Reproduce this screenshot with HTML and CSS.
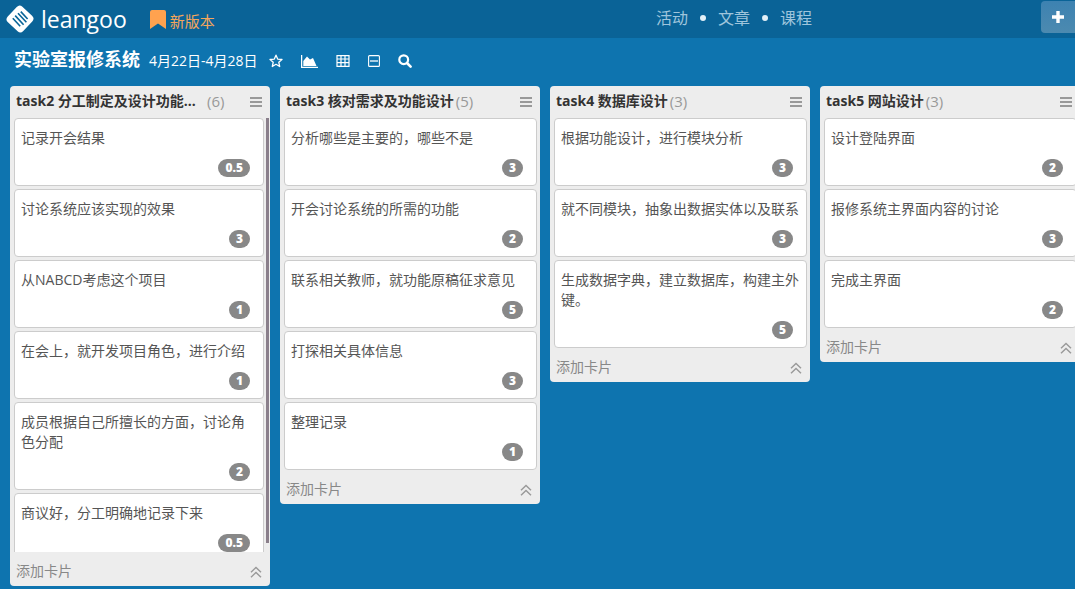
FILE: index.html
```html
<!DOCTYPE html>
<html lang="zh-CN">
<head>
<meta charset="utf-8">
<meta name="viewport" content="width=device-width, initial-scale=1">
<title>实验室报修系统 - leangoo</title>
<link rel="stylesheet" href="styles.css">
</head>
<body>
<svg class="sprite" aria-hidden="true">
  <symbol id="menu" viewBox="0 0 12 10"><path d="M0 1h12M0 5h12M0 9h12" fill="none" stroke="currentColor" stroke-width="2"/></symbol>
  <symbol id="up" viewBox="0 0 12 12"><path d="M1 6.2 6 1.4l5 4.8M1 11.2 6 6.4l5 4.8" fill="none" stroke="currentColor" stroke-width="1.4"/></symbol>
</svg>
<header class="topbar">
  <a class="brand" href="#">
    <svg class="brand-mark" viewBox="0 0 28 28" aria-hidden="true">
      <rect x="3.400" y="3.400" width="21.200" height="21.200" rx="4" transform="rotate(43 14 14)" fill="#fff"/>
      <path d="M6.800 13.200 14.200 21.200M9.200 10.600 17.600 19.700M12 8.200 20.400 17.300M14.800 6.600 21.600 14" fill="none" stroke="#0a6598" stroke-width="1.600"/>
    </svg>
    <span class="brand-name">leangoo</span>
  </a>
  <a class="new-version" href="#">
    <svg class="bookmark" viewBox="0 0 16 19" aria-hidden="true"><path d="M2 0h12q2 0 2 2v17l-8-5.500L0 19V2Q0 0 2 0z" fill="#ffa24f"/></svg>
    <span>新版本</span>
  </a>
  <nav class="nav">
    <a href="#">活动</a><i class="dot"></i><a href="#">文章</a><i class="dot"></i><a href="#">课程</a>
  </nav>
  <button class="add" type="button" aria-label="新建"><svg viewBox="0 0 12 12" width="12" height="12"><path d="M4.3 0h3.4v4.3H12v3.4H7.7V12H4.3V7.7H0V4.3h4.3z" fill="#fff"/></svg></button>
</header>
<main class="page">
  <div class="board-bar">
    <h1 class="board-title">实验室报修系统</h1>
    <span class="dates">4月22日-4月28日</span>
    <div class="tools">
      <button type="button" aria-label="收藏"><svg width="14" height="14" viewBox="0 0 14 14"><path d="m7 1.200 1.700 3.900 4.300.4-3.200 2.800.9 4.200L7 10.300l-3.700 2.200.9-4.200L1 5.500l4.300-.4z" fill="none" stroke="#fff" stroke-width="1.300" stroke-linejoin="round"/></svg></button>
      <button type="button" aria-label="图表"><svg width="17" height="13" viewBox="0 0 17 13"><path d="M.6 0v12.300H17" fill="none" stroke="#fff" stroke-width="1.300"/><path d="M2.300 11V6L6 1.500l3 3L12 3l3.500 8z" fill="#fff"/></svg></button>
      <button type="button" aria-label="表格"><svg width="14" height="12" viewBox="0 0 14 12"><path d="M1 .6h12v10.800H1zM1 4h12M1 7.700h12M5 .6v10.800M9 .6v10.800" fill="none" stroke="#fff" stroke-width="1.200"/></svg></button>
      <button type="button" aria-label="折叠"><svg width="12" height="12" viewBox="0 0 12 12"><rect x=".6" y=".6" width="10.800" height="10.800" rx="1" fill="none" stroke="#fff" stroke-width="1.100"/><path d="M2 6h8" stroke="#fff" stroke-width="1.300"/></svg></button>
      <button type="button" aria-label="搜索"><svg width="14" height="14" viewBox="0 0 14 14"><circle cx="5.700" cy="5.700" r="4.400" fill="none" stroke="#fff" stroke-width="2.200"/><path d="m9 9 3.600 3.600" stroke="#fff" stroke-width="2.600" stroke-linecap="round"/></svg></button>
    </div>
  </div>
  <div class="board">
    <section class="list">
      <header class="list-head"><h2>task2 分工制定及设计功能原型</h2><span class="count">(6)</span><button class="icon" type="button" aria-label="菜单"><svg width="12" height="10"><use href="#menu"/></svg></button></header>
      <div class="list-body scrolls">
        <div class="cards">
          <article class="card"><p>记录开会结果</p><span class="points">0.5</span></article>
          <article class="card"><p>讨论系统应该实现的效果</p><span class="points">3</span></article>
          <article class="card"><p>从NABCD考虑这个项目</p><span class="points">1</span></article>
          <article class="card"><p>在会上，就开发项目角色，进行介绍</p><span class="points">1</span></article>
          <article class="card"><p>成员根据自己所擅长的方面，讨论角色分配</p><span class="points">2</span></article>
          <article class="card"><p>商议好，分工明确地记录下来</p><span class="points">0.5</span></article>
        </div>
        <div class="track"><div class="thumb"></div></div>
      </div>
      <footer class="list-foot"><button class="add-card" type="button">添加卡片</button><button class="icon" type="button" aria-label="收起"><svg width="12" height="12"><use href="#up"/></svg></button></footer>
    </section>
    <section class="list">
      <header class="list-head"><h2>task3 核对需求及功能设计</h2><span class="count">(5)</span><button class="icon" type="button" aria-label="菜单"><svg width="12" height="10"><use href="#menu"/></svg></button></header>
      <div class="list-body"><div class="cards">
          <article class="card"><p>分析哪些是主要的，哪些不是</p><span class="points">3</span></article>
          <article class="card"><p>开会讨论系统的所需的功能</p><span class="points">2</span></article>
          <article class="card"><p>联系相关教师，就功能原稿征求意见</p><span class="points">5</span></article>
          <article class="card"><p>打探相关具体信息</p><span class="points">3</span></article>
          <article class="card"><p>整理记录</p><span class="points">1</span></article>
      </div></div>
      <footer class="list-foot"><button class="add-card" type="button">添加卡片</button><button class="icon" type="button" aria-label="收起"><svg width="12" height="12"><use href="#up"/></svg></button></footer>
    </section>
    <section class="list">
      <header class="list-head"><h2>task4 数据库设计</h2><span class="count">(3)</span><button class="icon" type="button" aria-label="菜单"><svg width="12" height="10"><use href="#menu"/></svg></button></header>
      <div class="list-body"><div class="cards">
          <article class="card"><p>根据功能设计，进行模块分析</p><span class="points">3</span></article>
          <article class="card"><p>就不同模块，抽象出数据实体以及联系</p><span class="points">3</span></article>
          <article class="card"><p>生成数据字典，建立数据库，构建主外键。</p><span class="points">5</span></article>
      </div></div>
      <footer class="list-foot"><button class="add-card" type="button">添加卡片</button><button class="icon" type="button" aria-label="收起"><svg width="12" height="12"><use href="#up"/></svg></button></footer>
    </section>
    <section class="list">
      <header class="list-head"><h2>task5 网站设计</h2><span class="count">(3)</span><button class="icon" type="button" aria-label="菜单"><svg width="12" height="10"><use href="#menu"/></svg></button></header>
      <div class="list-body"><div class="cards">
          <article class="card"><p>设计登陆界面</p><span class="points">2</span></article>
          <article class="card"><p>报修系统主界面内容的讨论</p><span class="points">3</span></article>
          <article class="card"><p>完成主界面</p><span class="points">2</span></article>
      </div></div>
      <footer class="list-foot"><button class="add-card" type="button">添加卡片</button><button class="icon" type="button" aria-label="收起"><svg width="12" height="12"><use href="#up"/></svg></button></footer>
    </section>
  </div>
</main>
</body>
</html>
```
FILE: styles.css
```css
* { box-sizing: border-box; }
body {
  margin: 0;
  height: 100vh;
  display: flex;
  flex-direction: column;
  overflow: hidden;
  background: #0e74af;
  font: 14px/20px "Open Sans", "Noto Sans CJK SC", sans-serif;
  color: #555;
}
h1, h2, p { margin: 0; }
a { text-decoration: none; }
button { border: 0; padding: 0; background: none; font: inherit; color: inherit; cursor: pointer; }
svg { display: block; }
.sprite { display: none; }

.topbar { flex: none; display: flex; align-items: center; height: 38px; padding-left: 6px; background: #0a6397; }
.brand { display: flex; align-items: center; gap: 7px; color: #fff; }
.brand-mark { width: 28px; height: 28px; }
.brand-name { font-size: 23px; line-height: 36px; }
.new-version { display: flex; align-items: center; gap: 4px; margin-left: 23px; padding-top: 4px; color: #f5a65b; font-size: 15px; }
.bookmark { width: 16px; height: 19px; margin-bottom: 3px; }
.nav { display: flex; align-items: center; gap: 12px; margin-left: auto; margin-right: 229px; padding-bottom: 3px; font-size: 16px; }
.nav a { color: #9fc5dc; }
.dot { width: 6px; height: 6px; border-radius: 50%; background: #e2f0f8; }
.add { display: grid; place-items: center; align-self: flex-start; width: 34px; height: 32px; margin-top: 1px; border-radius: 4px 0 0 4px; background: linear-gradient(#3d82b1, #4c8ab0); }

.page { flex: 1; min-height: 0; display: flex; flex-direction: column; }
.board-bar { flex: none; display: flex; align-items: center; height: 48px; padding: 0 14px 6px; color: #fff; }
.board-title { font-size: 18px; line-height: 24px; font-weight: 700; }
.dates { margin-left: 9px; padding-top: 4px; font-size: 14px; }
.tools { display: flex; align-items: center; gap: 18px; margin-left: 11px; padding-top: 4px; }

.board { flex: 1; min-height: 0; display: flex; align-items: flex-start; gap: 10px; padding: 0 10px 3px; overflow: hidden; }
.list { flex: none; display: flex; flex-direction: column; width: 260px; max-height: 100%; border-radius: 4px; background: #ededed; }
.list-head { flex: none; display: flex; align-items: center; height: 32px; padding: 0 8px 2px 6px; }
.list-head h2 { max-width: 189px; overflow: hidden; text-overflow: ellipsis; white-space: nowrap; font-size: 14px; line-height: 20px; font-weight: 700; color: #333; }
.count { margin-left: 2px; font-size: 15px; color: #999; }
.icon { margin-left: auto; padding-top: 2px; color: #999; }
.list-body { min-height: 0; display: flex; padding: 0 3px 0 4px; overflow: hidden; }
.list-body.scrolls { padding-right: 1px; gap: 2px; }
.cards { flex: 1; display: flex; flex-direction: column; gap: 3px; }
.track { flex: none; display: flex; flex-direction: column; width: 3px; padding-bottom: 9px; }
.thumb { flex: 1; background: #8a7f8b; }
.card { flex: none; display: flex; flex-direction: column; padding: 9px 13px 8px 6px; border: 1px solid #ccc; border-radius: 4px; background: #fff; }
.points { align-self: flex-end; margin-top: 11px; padding: 0 7px; border-radius: 9px; background: #888; color: #fff; font-size: 12px; line-height: 18px; font-weight: 800; }
.card p { margin-right: -8px; }
.list-foot { flex: none; display: flex; align-items: center; height: 34px; padding: 4px 8px 0 6px; color: #888; }
```
